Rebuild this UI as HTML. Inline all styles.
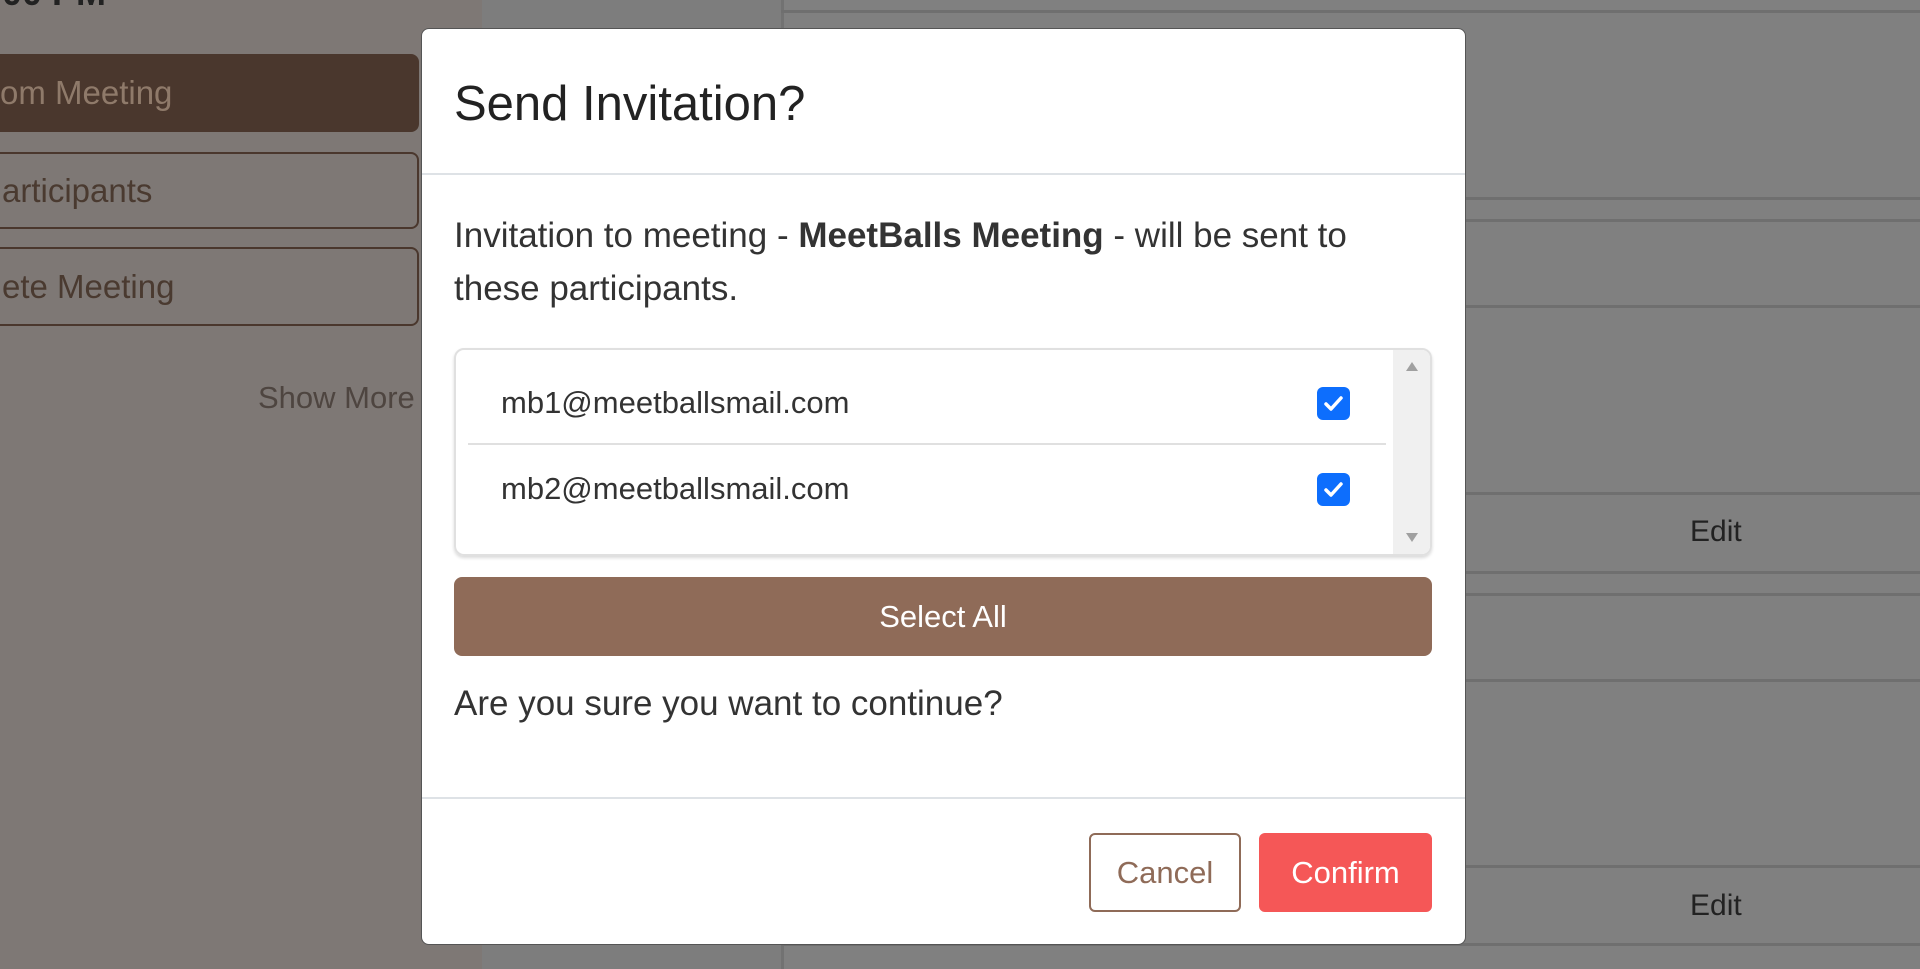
<!DOCTYPE html>
<html><head><meta charset="utf-8"><style>
*{box-sizing:border-box;margin:0;padding:0}
body{width:1920px;height:969px;overflow:hidden;background:#808080;font-family:"Liberation Sans",sans-serif;position:relative}
.abs{position:absolute}
.left{left:0;top:0;width:482px;height:969px;background:#7e7875}
.mid{left:482px;top:0;width:299px;height:969px;background:#7d7d7d}
.hl{height:3px;background:#6f6f6f;left:781px;right:0}
.side{left:-20px;width:439px;border-radius:8px;font-size:33px;color:#4a3a30;padding-left:20px;display:flex;align-items:center}
.edit{font-size:30px;color:#222;left:1690px}
.modal{left:421px;top:28px;width:1045px;height:917px;background:#fff;border-radius:8px;border:1px solid #555}
.t{color:#222}
</style></head><body>
<div class="abs left"></div>
<div class="abs mid"></div>
<div class="abs" style="left:-10px;top:-28px;font-size:36px;font-weight:bold;color:#222">:00 PM</div>
<div class="abs side" style="top:54px;height:78px;background:#4a372d;color:#8f7a6a">om Meeting</div>
<div class="abs side" style="top:152px;height:77px;border:2px solid #4a372d">articipants</div>
<div class="abs side" style="top:247px;height:79px;border:2px solid #4a372d">ete Meeting</div>
<div class="abs" style="left:258px;top:380px;font-size:31px;color:#4e4540">Show More</div>
<div class="abs" style="left:781px;top:0;width:3px;height:969px;background:#727272"></div>
<div class="abs hl" style="top:10px"></div>
<div class="abs hl" style="top:197px"></div>
<div class="abs hl" style="top:219px"></div>
<div class="abs hl" style="top:305px"></div>
<div class="abs hl" style="top:492px"></div>
<div class="abs hl" style="top:571px"></div>
<div class="abs hl" style="top:593px"></div>
<div class="abs hl" style="top:679px"></div>
<div class="abs hl" style="top:865px"></div>
<div class="abs hl" style="top:943px"></div>
<div class="abs edit" style="top:515px">Edit</div>
<div class="abs edit" style="top:889px">Edit</div>

<div class="abs modal">
  <div class="abs t" style="left:32px;top:47px;font-size:49px;">Send Invitation?</div>
  <div class="abs" style="left:0;right:0;top:144px;height:2px;background:#dee2e6"></div>
  <div class="abs t" style="left:32px;top:180px;width:1000px;font-size:35px;line-height:53px;color:#333;white-space:nowrap">Invitation to meeting - <b>MeetBalls Meeting</b> - will be sent to<br>these participants.</div>
  <div class="abs" style="left:32px;top:319px;width:978px;height:208px;border:2px solid #e0e0e0;border-radius:10px;box-shadow:0 2px 3px rgba(0,0,0,.15);overflow:hidden">
    <div class="abs" style="right:0;top:0;width:37px;height:100%;background:#f0f0f0"></div>
    <div class="abs" style="right:12px;top:12px;width:0;height:0;border-left:6px solid transparent;border-right:6px solid transparent;border-bottom:9px solid #a0a0a0"></div>
    <div class="abs" style="right:12px;bottom:12px;width:0;height:0;border-left:6px solid transparent;border-right:6px solid transparent;border-top:9px solid #a0a0a0"></div>
    <div class="abs t" style="left:45px;top:35px;font-size:31px;color:#333">mb1@meetballsmail.com</div>
    <div class="abs" style="left:12px;top:93px;width:918px;height:2px;background:#e0e0e0"></div>
    <div class="abs t" style="left:45px;top:121px;font-size:31px;color:#333">mb2@meetballsmail.com</div>
    <svg class="abs" style="left:861px;top:37px" width="33" height="33" viewBox="0 0 33 33"><rect width="33" height="33" rx="6" fill="#0d6efd"/><path d="M9 17l5 5 10-11" stroke="#fff" stroke-width="3.5" fill="none" stroke-linecap="round" stroke-linejoin="round"/></svg>
    <svg class="abs" style="left:861px;top:123px" width="33" height="33" viewBox="0 0 33 33"><rect width="33" height="33" rx="6" fill="#0d6efd"/><path d="M9 17l5 5 10-11" stroke="#fff" stroke-width="3.5" fill="none" stroke-linecap="round" stroke-linejoin="round"/></svg>
  </div>
  <div class="abs" style="left:32px;top:548px;width:978px;height:79px;background:#8f6b58;border-radius:8px;color:#fff;font-size:31px;display:flex;align-items:center;justify-content:center">Select All</div>
  <div class="abs" style="left:32px;top:655px;font-size:35px;color:#333">Are you sure you want to continue?</div>
  <div class="abs" style="left:0;right:0;top:768px;height:2px;background:#dee2e6"></div>
  <div class="abs" style="left:667px;top:804px;width:152px;height:79px;border:2px solid #8f6b58;border-radius:6px;color:#8f6b58;font-size:31px;display:flex;align-items:center;justify-content:center">Cancel</div>
  <div class="abs" style="left:837px;top:804px;width:173px;height:79px;background:#f55757;border-radius:6px;color:#fff;font-size:31px;display:flex;align-items:center;justify-content:center">Confirm</div>
</div>
</body></html>
